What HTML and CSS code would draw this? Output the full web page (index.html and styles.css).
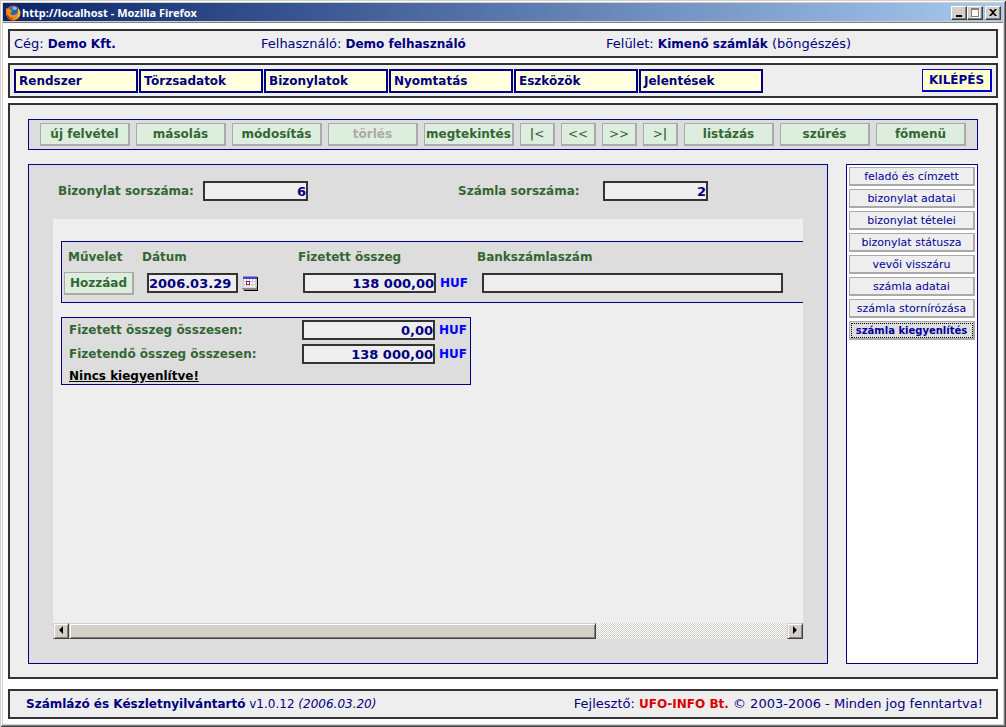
FILE: index.html
```html
<!DOCTYPE html>
<html lang="hu">
<head>
<meta charset="utf-8">
<title>http://localhost - Mozilla Firefox</title>
<link rel="stylesheet" href="styles.css">
</head>
<body>
<div class="window">
  <header class="titlebar">
    <svg class="logo" viewBox="0 0 16 16" aria-hidden="true">
      <circle cx="8.2" cy="8" r="7.4" fill="#d85a10"/>
      <circle cx="8.6" cy="6.6" r="5.4" fill="#2b62b8"/>
      <path d="M7 2.5 10 1.6 12 3.4 10.5 5 8 4.6Z" fill="#7cc4ee"/>
      <path d="M1 3 3 4 5 3.2 5.4 5 7.6 5.8 6.4 7.2 5 8 6.6 10 9.6 10 12.6 8 13 4 15 6 15.4 9.5 13 13.6 8.5 15.4 4 13.8 1.2 10Z" fill="#f38a1a"/>
      <path d="M13.2 3.4 15 6.4 14.4 11 11.6 13.4 13.6 9Z" fill="#ffd24a"/>
      <path d="M1 4 2.2 9.4 5 12.6 9 13.8 5.4 14.2 2 11.4Z" fill="#b93508"/>
    </svg>
    <h1 class="title">http://localhost - Mozilla Firefox</h1>
    <button class="win-btn" type="button" aria-label="Minimize"><svg viewBox="0 0 12 10"><path d="M3 7h6v2H3z" fill="#000"/></svg></button>
    <button class="win-btn" type="button" aria-label="Maximize" disabled><svg viewBox="0 0 12 10"><path d="M3 1h8v9H3z" fill="#fff"/><path d="M2 0h8v9H2zM3 2v6h6V2z" fill="#808080" fill-rule="evenodd"/></svg></button>
    <button class="win-btn win-close" type="button" aria-label="Close"><svg viewBox="0 0 12 10"><path d="M2 1h2l2 2 2-2h2L7 4.500 10 8H8L6 6 4 8H2l3-3.500z" fill="#000"/></svg></button>
  </header>
  <div class="page">
    <section class="frame info">
      <span>Cég: <b>Demo Kft.</b></span>
      <span>Felhasználó: <b>Demo felhasználó</b></span>
      <span>Felület: <b>Kimenő számlák</b> (böngészés)</span>
    </section>
    <nav class="frame menu">
      <button class="menu-item" type="button">Rendszer</button>
      <button class="menu-item" type="button">Törzsadatok</button>
      <button class="menu-item" type="button">Bizonylatok</button>
      <button class="menu-item" type="button">Nyomtatás</button>
      <button class="menu-item" type="button">Eszközök</button>
      <button class="menu-item" type="button">Jelentések</button>
      <button class="exit" type="button">KILÉPÉS</button>
    </nav>
    <main class="frame main">
      <div class="toolbar">
        <button class="btn tool" type="button">új felvétel</button>
        <button class="btn tool" type="button">másolás</button>
        <button class="btn tool" type="button">módosítás</button>
        <button class="btn tool" type="button" disabled>törlés</button>
        <button class="btn tool" type="button">megtekintés</button>
        <button class="btn tool step" type="button">|<span class="sign">&lt;</span></button>
        <button class="btn tool step" type="button"><span class="sign">&lt;&lt;</span></button>
        <button class="btn tool step" type="button"><span class="sign">&gt;&gt;</span></button>
        <button class="btn tool step" type="button"><span class="sign">&gt;</span>|</button>
        <button class="btn tool" type="button">listázás</button>
        <button class="btn tool" type="button">szűrés</button>
        <button class="btn tool" type="button">főmenü</button>
      </div>
      <div class="columns">
        <section class="panel">
          <div class="ids">
            <div class="id-field"><label for="doc">Bizonylat sorszáma:</label><input class="field id-input num" id="doc" value="6"></div>
            <div class="id-field"><label for="inv">Számla sorszáma:</label><input class="field id-input num" id="inv" value="2"></div>
          </div>
          <div class="scroller">
            <div class="view">
              <table class="payments">
                <thead><tr>
                  <th class="col-op">Művelet</th>
                  <th class="col-date"><label for="date">Dátum</label></th>
                  <th class="col-sum"><label for="sum">Fizetett összeg</label></th>
                  <th><label for="bank">Bankszámlaszám</label></th>
                </tr></thead>
                <tbody><tr>
                  <td><button class="btn add" type="button">Hozzáad</button></td>
                  <td><div class="cell"><input class="field date" id="date" value="2006.03.29"><button class="cal" type="button" aria-label="Naptár"><svg viewBox="0 0 16 15" shape-rendering="crispEdges"><path d="M15 1h1v14H2v-1h13z" fill="#000"/><path d="M1 1h14v2H1z" fill="#4444bb"/><path d="M1 0h14v1H1z" fill="#8888ff"/><path d="M1 3h14v8H1z" fill="#ccc"/><path d="M2 3h2v2H2zM5 3h2v2H5zM8 3h2v2H8zM11 3h2v2h-2zM2 6h2v2H2zM8 6h2v2H8zM11 6h2v2h-2zM2 9h2v2H2zM5 9h2v2H5zM8 9h2v2H8zM11 9h2v2h-2z" fill="#fff"/><path d="M4 5h4v4H4z" fill="#a02050"/><path d="M5 6h2v2H5z" fill="#fff"/><path d="M1 11h13v1H1z" fill="#ddd"/><path d="M0 12h14v-1h1v3H1v-1H0z" fill="#888"/></svg></button></div></td>
                  <td><div class="cell"><input class="field amount num" id="sum" value="138 000,00"><span class="huf">HUF</span></div></td>
                  <td><div class="cell"><input class="field bank" id="bank"></div></td>
                </tr></tbody>
              </table>
              <div class="totals">
                <label for="paid">Fizetett összeg összesen:</label><input class="field amount num" id="paid" value="0,00"><span class="huf">HUF</span>
                <label for="due">Fizetendő összeg összesen:</label><input class="field amount num" id="due" value="138 000,00"><span class="huf">HUF</span>
                <a class="status" href="#">Nincs kiegyenlítve!</a>
              </div>
            </div>
            <div class="scrollbar">
              <button class="arrow" type="button" aria-label="Balra"><svg viewBox="0 0 12 12"><path d="M8 1v8L4 5z"/></svg></button>
              <div class="track"><div class="thumb"></div></div>
              <button class="arrow" type="button" aria-label="Jobbra"><svg viewBox="0 0 12 12"><path d="M4 1v8l4-4z"/></svg></button>
            </div>
          </div>
        </section>
        <aside class="side">
          <button class="tab" type="button">feladó és címzett</button>
          <button class="tab" type="button">bizonylat adatai</button>
          <button class="tab" type="button">bizonylat tételei</button>
          <button class="tab" type="button">bizonylat státusza</button>
          <button class="tab" type="button">vevői visszáru</button>
          <button class="tab" type="button">számla adatai</button>
          <button class="tab" type="button">számla stornírózása</button>
          <button class="tab current" type="button">számla kiegyenlítés</button>
        </aside>
      </div>
    </main>
    <footer class="frame footer">
      <span class="product"><b>Számlázó és Készletnyilvántartó</b> v1.0.12 <i>(2006.03.20)</i></span>
      <span>Fejlesztő: <b class="maker">UFO-INFO Bt.</b> © 2003-2006 - Minden jog fenntartva!</span>
    </footer>
  </div>
</div>
</body>
</html>
```
FILE: styles.css
```css
* { box-sizing: border-box; }
body { margin: 0; font: 13px/16px "DejaVu Sans", sans-serif; color: #000080; background: #fff; }
button, input { margin: 0; padding: 0; border-radius: 0; font: bold 12px/16px "DejaVu Sans", sans-serif; color: inherit; }
b { font-size: 12px; }
svg { display: block; }

.window {
  display: flex; flex-direction: column; min-height: 100vh; padding: 3px;
  box-shadow: inset 1px 1px #d4d0c8, inset -1px -1px #404040, inset 2px 2px #fff, inset -2px -2px #808080, inset 0 0 0 3px #d4d0c8;
}
.titlebar {
  display: flex; align-items: center; height: 20px; padding: 0 2px;
  background: linear-gradient(to right, #0a246a, #a6caf0);
  border-bottom: 1px solid #808080; box-shadow: inset 0 -1px #d4d0c8;
}
.logo { width: 16px; height: 16px; }
.title { flex: 1; margin: 0 0 0 1px; font: bold 11px/16px "Noto Sans", sans-serif; color: #fff; }
.win-btn {
  width: 16px; height: 14px; padding: 1px; background: #d4d0c8; border: 1px solid;
  border-color: #fff #404040 #404040 #fff; box-shadow: inset -1px -1px #808080;
}
.win-btn svg { width: 12px; height: 10px; }
.win-close { margin-left: 2px; }

.page { flex: 1; display: flex; flex-direction: column; gap: 5px; padding: 6px 5px 5px; }
.frame { background: #eee; border: 2px solid #333; }
.info { display: grid; grid-template-columns: 247fr 345fr 386fr; align-items: center; height: 29px; padding: 0 4px; }
.menu { display: flex; gap: 1px; align-items: center; height: 35px; padding: 0 4px; }
.menu-item { width: 124px; height: 24px; padding: 0 3px; text-align: left; background: #ffd; border: 2px solid #000080; }
.exit { width: 70px; height: 23px; margin-left: auto; background: #ffc; color: #009; border: solid #0000cc; border-width: 1px 2px 2px 1px; }

.main { flex: 1; display: flex; flex-direction: column; gap: 14px; padding: 14px 18px 13px; }
.toolbar { display: flex; justify-content: center; gap: 6px; padding: 3px; background: #ddd; border: 1px solid #000080; }
.btn { height: 23px; background: #deeede; color: #336633; border: solid #aaa; border-width: 1px 2px 2px 1px; }
.tool { width: 90px; }
.tool.step { width: 35px; }
.sign { font-weight: normal; }
.btn:disabled { color: #aaa; }

.columns { flex: 1; display: flex; gap: 18px; }
.panel { flex: 1; min-width: 0; display: flex; flex-direction: column; padding: 16px 24px 24px; background: #ddd; border: 1px solid #000080; }
label, th { font-weight: bold; font-size: 12px; color: #336633; }
.ids { display: grid; grid-template-columns: 400px 1fr; padding-left: 5px; margin-bottom: 18px; }
.id-field { display: flex; align-items: center; }
.id-field label { width: 145px; }
.field { height: 20px; padding: 0 1px; font-size: 13px; background: #eee; border: 2px solid #333; }
.num { text-align: right; }
.id-input { width: 105px; padding: 0; }

.scroller { flex: 1; display: flex; flex-direction: column; background: #eee; }
.view { flex: 1; overflow: hidden; padding: 22px 8px 0; }
.payments { width: 1006px; height: 62px; table-layout: fixed; border-collapse: separate; border-spacing: 0; background: #ddd; border: 1px solid #000080; }
th { height: 29px; padding: 0 0 0 5px; text-align: left; }
td { padding: 0 0 0 10px; vertical-align: top; }
th:first-child { padding-left: 6px; }
td:first-child { padding-left: 2px; }
.col-op { width: 75px; }
.col-date { width: 156px; }
.col-sum { width: 179px; }
.cell { display: flex; align-items: center; gap: 4px; padding-top: 2px; }
.add { display: block; width: 70px; margin-top: 1px; }
.date { width: 91px; padding: 0; }
.cal { width: 16px; height: 15px; background: none; border: 0; }
.cal svg { width: 16px; height: 15px; }
.amount { width: 133px; padding: 0; }
.bank { width: 301px; }
.huf { font-weight: bold; font-size: 12px; color: #0000ff; }

.totals {
  display: grid; grid-template-columns: 233px 133px 1fr; column-gap: 0; row-gap: 4px; align-items: center;
  width: 410px; height: 68px; margin-top: 14px; padding: 2px 0 0 7px; background: #ddd; border: 1px solid #000080;
}
.totals .huf { padding-left: 4px; }
.status { grid-column: 1 / -1; font: bold 12px/16px "DejaVu Sans", sans-serif; color: #000; }

.scrollbar { display: flex; height: 16px; }
.arrow, .thumb { background: #d4d0c8; border: 1px solid; border-color: #d4d0c8 #404040 #404040 #d4d0c8; box-shadow: inset 1px 1px #fff, inset -1px -1px #808080; }
.arrow { width: 16px; height: 16px; padding: 1px; }
.arrow svg { width: 12px; height: 12px; }
.track { flex: 1; background: repeating-conic-gradient(#d4d0c8 0 25%, #fff 0 50%) 0 0 / 2px 2px; }
.thumb { width: 73.4%; height: 16px; }

.side { width: 132px; display: flex; flex-direction: column; gap: 3px; padding: 2px; background: #fff; border: 1px solid #000080; }
.tab { height: 19px; padding-top: 1px; font-weight: normal; font-size: 11px; line-height: 14px; color: #009; background: #eee; border: solid #aaa; border-width: 1px 2px 2px 1px; white-space: nowrap; }
.tab.current { font-weight: bold; font-size: 10px; background: #ddd; outline: 1px dotted #000; outline-offset: -3px; }

.footer { display: flex; justify-content: space-between; align-items: center; height: 30px; margin-top: 5px; padding: 0 13px 0 16px; }
.product { font-size: 12px; }
.maker { color: #dd0000; }
```
